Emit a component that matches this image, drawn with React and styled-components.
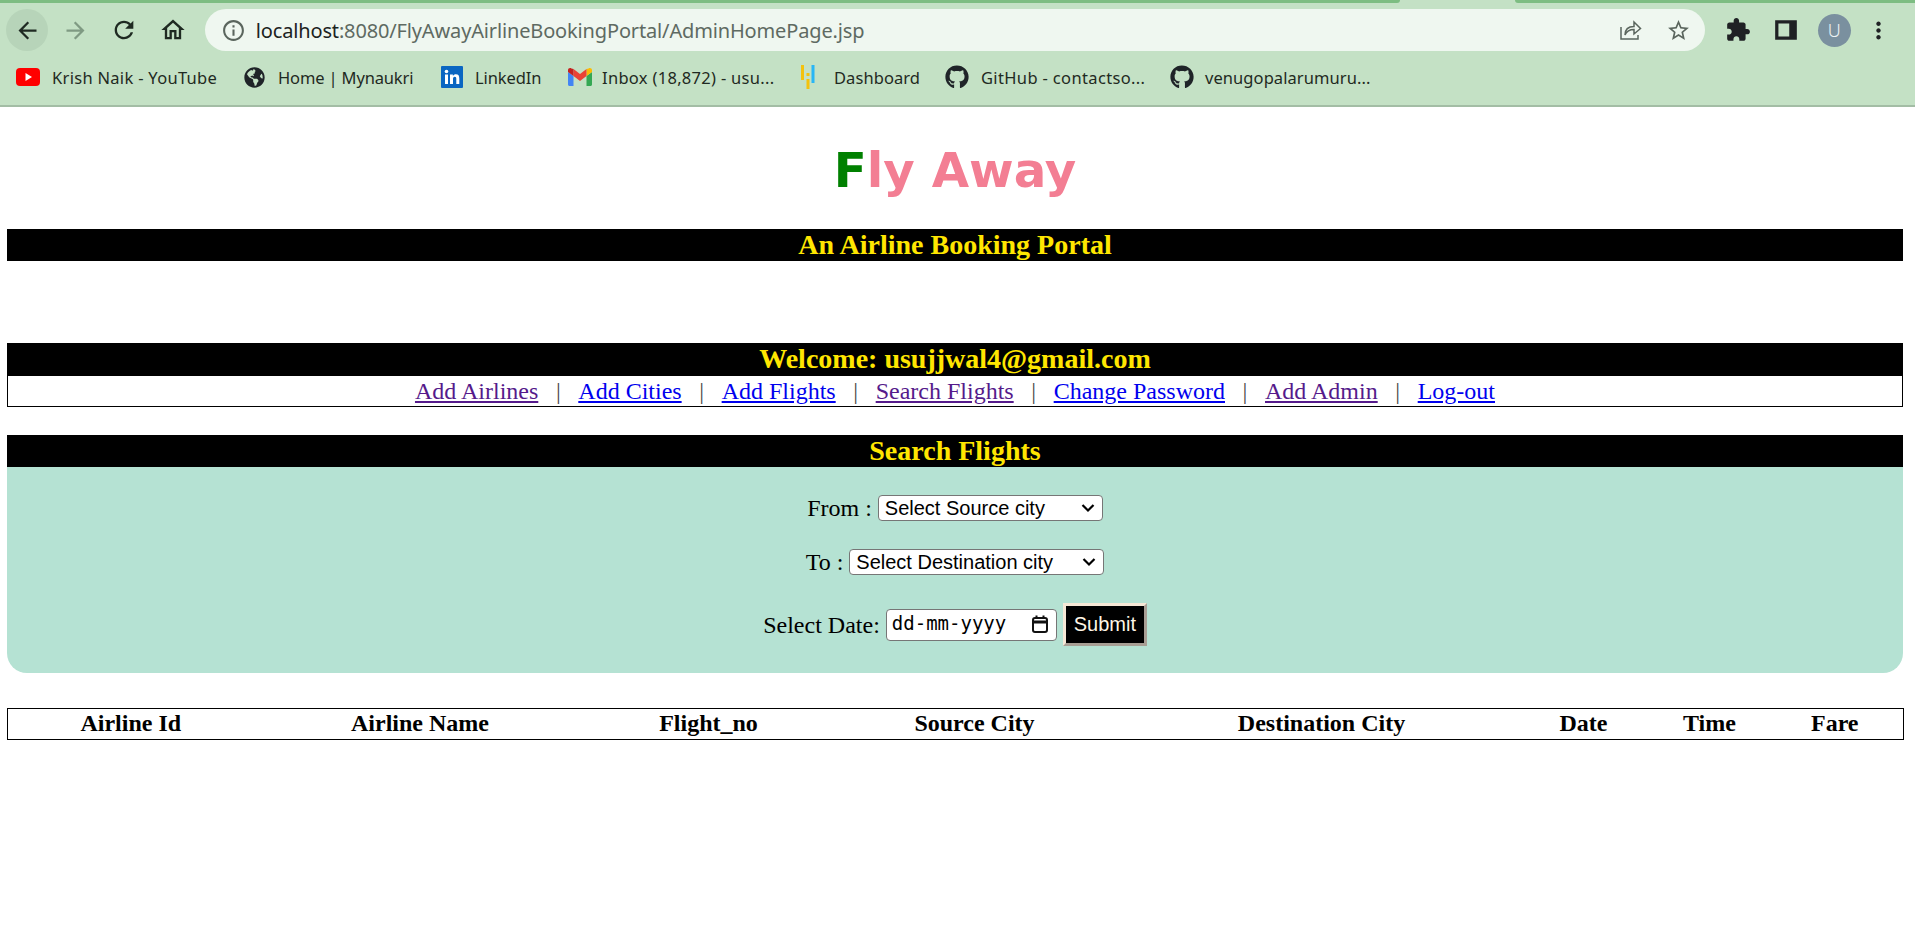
import React from "react";
import styled, { createGlobalStyle } from "styled-components";
import { FaGithub, FaGlobeAmericas } from "react-icons/fa";

const chevron = encodeURIComponent(
  '<svg xmlns="http://www.w3.org/2000/svg" width="16" height="10" viewBox="0 0 16 10"><path d="M2.500 2l5.500 5.500L13.500 2" fill="none" stroke="#000" stroke-width="2.200"/></svg>'
);

const Global = createGlobalStyle`
  html, body { margin: 0; padding: 0; background: #fff; }
  body { font-family: "Liberation Serif", "Times New Roman", serif; overflow: hidden; }
`;

const Page = styled.div`
  width: 1915px;
  height: 952px;
  display: flex;
  flex-direction: column;
  background: #fff;
`;

/* Browser chrome */
const Chrome = styled.header`
  height: 107px;
  flex: none;
  background: #c4e1c5;
  border-bottom: 2px solid #a3bda5;
  box-sizing: border-box;
  display: flex;
  flex-direction: column;
`;
const TabStrip = styled.div`
  height: 3px;
  flex: none;
  display: flex;
  justify-content: space-between;
`;
const TabPiece = styled.div`
  height: 3px;
  width: ${(p) => p.$w}px;
  background: #7dbd82;
  border-radius: ${(p) => (p.$right ? "0 0 0 4px" : "0 0 4px 0")};
`;
const Toolbar = styled.div`
  height: 42px;
  margin-top: 6px;
  flex: none;
  display: flex;
  align-items: center;
  padding-left: 6px;
`;
const NavButton = styled.div`
  width: 42px;
  height: 42px;
  margin-right: 6.700px;
  flex: none;
  border-radius: 50%;
  display: flex;
  align-items: center;
  justify-content: center;
  background: ${(p) => (p.$active ? "#b7d4b9" : "transparent")};
  color: ${(p) => p.$color || "#1f2a22"};
`;
const Omnibox = styled.div`
  width: 1500px;
  height: 42px;
  margin-left: 4px;
  flex: none;
  background: #eff7f0;
  border-radius: 21px;
  display: flex;
  align-items: center;
  padding: 0 14px 0 16px;
  box-sizing: border-box;
  font-family: "Noto Sans", sans-serif;
  font-size: 20px;
  color: #5e6a62;
`;
const Url = styled.div`
  margin-left: 10px;
  flex: 1;
  white-space: nowrap;
  letter-spacing: -0.15px;
`;
const UrlHost = styled.span`
  color: #1c231e;
`;
const OmniIcon = styled.div`
  display: flex;
  margin-left: ${(p) => p.$ml || 0}px;
  color: #5a655d;
`;
const ToolIcon = styled.div`
  width: 28px;
  height: 28px;
  flex: none;
  display: flex;
  align-items: center;
  justify-content: center;
  margin-left: ${(p) => p.$ml}px;
  color: #1f2124;
`;
const Avatar = styled.div`
  width: 33px;
  height: 33px;
  margin-left: ${(p) => p.$ml}px;
  flex: none;
  border-radius: 50%;
  background: #7a909f;
  color: #eef3f5;
  display: flex;
  align-items: center;
  justify-content: center;
  font-family: "Noto Sans", sans-serif;
  font-size: 18px;
  font-weight: 300;
`;
const Bookmarks = styled.nav`
  height: 28px;
  margin-top: 12px;
  flex: none;
  display: flex;
  align-items: center;
  padding-left: 16px;
  font-family: "Noto Sans", sans-serif;
  font-size: 16.5px;
  color: #1f2a22;
`;
const Bookmark = styled.div`
  display: flex;
  align-items: center;
  flex: none;
  width: ${(p) => p.$w}px;
  white-space: nowrap;
  letter-spacing: ${(p) => p.$ls}px;
`;
const BookmarkIcon = styled.span`
  width: 26px;
  height: 24px;
  flex: none;
  margin-right: ${(p) => p.$mr}px;
  display: flex;
  align-items: center;
  justify-content: flex-start;
  color: #1f2428;
`;

/* Page body */
const Main = styled.main`
  padding: 0 12px 0 7px;
  display: flex;
  flex-direction: column;
`;
const Logo = styled.h1`
  margin: 0;
  height: 122px;
  box-sizing: border-box;
  padding-top: 34px;
  text-align: center;
  font-family: "DejaVu Sans", sans-serif;
  font-size: 48.300px;
  line-height: 58px;
  font-weight: 700;
  color: #f37e93;
`;
const LogoInitial = styled.span`
  color: #008000;
`;
const Banner = styled.div`
  height: ${(p) => p.$h || 32}px;
  flex: none;
  background: #000;
  color: #ffe600;
  font-weight: 700;
  font-size: 28px;
  line-height: 32px;
  text-align: center;
`;
const Section = styled.section`
  margin-top: ${(p) => p.$mt}px;
`;
const NavRow = styled.div`
  height: 31px;
  box-sizing: border-box;
  border: 1px solid #000;
  border-top: none;
  display: flex;
  justify-content: center;
  align-items: center;
  font-size: 24px;
`;
const NavLink = styled.a`
  color: ${(p) => (p.$visited ? "#551a8b" : "#0000ee")};
  text-decoration: underline;
`;
const Sep = styled.span`
  margin: 0 17.600px;
  color: #4a4a4a;
`;
const SearchPanel = styled.form`
  background: #b5e2d3;
  border-radius: 0 0 20px 20px;
  padding: 28px 0 27px;
  display: flex;
  flex-direction: column;
  align-items: center;
  gap: 28px;
`;
const FormRow = styled.div`
  display: flex;
  align-items: center;
  justify-content: center;
  gap: 6px;
  font-size: 24px;
  line-height: 1;
  color: #000;
`;
const CitySelect = styled.select`
  width: ${(p) => p.$w}px;
  height: 26px;
  box-sizing: border-box;
  appearance: none;
  padding: 0 0 0 6px;
  font-family: "Liberation Sans", Arial, sans-serif;
  font-size: 20px;
  background: #fff url("data:image/svg+xml,${chevron}") no-repeat right 6px center;
  border: 1px solid #767676;
  border-radius: 4px;
  color: #000;
`;
const DateBox = styled.div`
  width: 171px;
  height: 32px;
  box-sizing: border-box;
  background: #fff;
  border: 1px solid #767676;
  border-radius: 4px;
  display: flex;
  align-items: center;
  justify-content: space-between;
  padding: 0 7px 2px 5px;
  font-family: "DejaVu Sans Mono", monospace;
  font-size: 19px;
  color: #000;
`;
const SubmitButton = styled.button`
  width: 84px;
  height: 43px;
  box-sizing: border-box;
  background: #000;
  color: #fff6e6;
  border: 3px solid;
  border-color: #f6e8d6 #a89e94 #a89e94 #f6e8d6;
  font-family: "Liberation Sans", Arial, sans-serif;
  font-size: 20px;
  padding: 0;
`;
const ResultsTable = styled.table`
  width: 100%;
  margin-top: 35px;
  table-layout: fixed;
  border-collapse: collapse;
  border: 1px solid #000;
  height: 32px;
`;
const Th = styled.th`
  box-sizing: border-box;
  width: ${(p) => p.$w}px;
  padding: 0 ${(p) => p.$pr || 0}px 1px 0;
  font-size: 24px;
  font-weight: 700;
  text-align: center;
  color: #000;
`;

const MaterialIcon = ({ d, size = 24 }) => (
  <svg width={size} height={size} viewBox="0 0 24 24" fill="currentColor"><path d={d} /></svg>
);

const YouTubeIcon = () => (
  <svg width="24" height="18" viewBox="0 0 24 18">
    <rect width="24" height="18" y="0" rx="4" fill="#ff0000" />
    <path d="M9.500 5l6.500 4-6.500 4z" fill="#fff" />
  </svg>
);
const LinkedInIcon = () => (
  <svg width="22" height="22" viewBox="0 0 22 22">
    <rect width="22" height="22" fill="#0a66c2" rx="1" />
    <rect x="4" y="8.500" width="3" height="9.500" fill="#fff" />
    <circle cx="5.500" cy="5.500" r="1.800" fill="#fff" />
    <path d="M9 8.500h2.900v1.400c.6-1 1.700-1.700 3-1.700 2.600 0 3.400 1.600 3.400 4.200V18h-3v-5c0-1.300-.4-2.200-1.600-2.200s-1.700 1-1.700 2.200v5H9z" fill="#fff" />
  </svg>
);
const GmailIcon = () => (
  <svg width="24" height="18" viewBox="0 0 24 18">
    <path d="M1.500 18h4V8L0 4v12.500C0 17.300.7 18 1.500 18z" fill="#4285f4" />
    <path d="M18.500 18h4c.8 0 1.500-.7 1.500-1.500V4l-5.500 4z" fill="#34a853" />
    <path d="M18.500 1v7L24 4V2.200C24 .4 22-.6 20.600.5z" fill="#fbbc04" />
    <path d="M5.500 8V1L12 6l6.500-5v7L12 13z" fill="#ea4335" />
    <path d="M0 2.200V4l5.500 4V1L3.400.5C2-.6 0 .4 0 2.200z" fill="#c5221f" />
  </svg>
);
const DashboardIcon = () => (
  <svg width="14" height="24" viewBox="0 0 14 24">
    <rect x="0" y="0" width="3" height="15" fill="#f4c20d" />
    <rect x="5.500" y="8" width="3" height="3" fill="#f4c20d" />
    <rect x="5.500" y="14" width="3" height="10" fill="#f4c20d" />
    <rect x="10.500" y="0" width="3" height="18" fill="#29b6f6" />
  </svg>
);
const ShareIcon = () => (
  <svg width="24" height="24" viewBox="0 0 24 24" fill="none" stroke="currentColor" strokeWidth="1.500">
    <path d="M3 9v12h17v-4" />
    <path d="M7 17c0-6 4-8.500 9-8.500V4l6.500 6.500L16 16v-4.500c-4 0-7 1-9 5.500z" />
  </svg>
);
const CalendarIcon = () => (
  <svg width="18" height="18" viewBox="0 0 18 18" fill="none" stroke="#111" strokeWidth="2">
    <rect x="2" y="3" width="14" height="14" rx="2" />
    <path d="M2 7h14" strokeWidth="3" />
    <path d="M5.500 0.500v3M12.500 0.500v3" />
  </svg>
);

const icons = {
  back: "M20 11H7.830l5.590-5.590L12 4l-8 8 8 8 1.410-1.410L7.830 13H20v-2z",
  forward: "M4 11h12.170l-5.590-5.590L12 4l8 8-8 8-1.410-1.410L16.170 13H4v-2z",
  reload: "M17.650 6.350C16.200 4.900 14.210 4 12 4c-4.420 0-7.990 3.580-7.990 8s3.570 8 7.990 8c3.730 0 6.840-2.550 7.730-6h-2.080c-.82 2.330-3.040 4-5.650 4-3.310 0-6-2.690-6-6s2.690-6 6-6c1.660 0 3.140.69 4.220 1.780L13 11h7V4l-2.350 2.350z",
  home: "M12 5.690l5 4.500V18h-2v-6H9v6H7v-7.810l5-4.500M12 3L2 12h3v8h6v-6h2v6h6v-8h3L12 3z",
  info: "M11 7h2v2h-2zm0 4h2v6h-2zm1-9C6.480 2 2 6.480 2 12s4.480 10 10 10 10-4.480 10-10S17.520 2 12 2zm0 18c-4.410 0-8-3.590-8-8s3.590-8 8-8 8 3.590 8 8-3.590 8-8 8z",
  star: "M22 9.240l-7.190-.62L12 2 9.190 8.630 2 9.240l5.460 4.730L5.820 21 12 17.270 18.180 21l-1.630-7.030L22 9.240zM12 15.400l-3.760 2.270 1-4.280-3.320-2.880 4.380-.38L12 6.100l1.710 4.040 4.380.38-3.320 2.880 1 4.280L12 15.400z",
  puzzle: "M20.500 11H19V7c0-1.100-.9-2-2-2h-4V3.500C13 2.120 11.880 1 10.500 1S8 2.120 8 3.500V5H4c-1.100 0-1.990.9-1.990 2v3.800H3.500c1.490 0 2.700 1.210 2.700 2.700s-1.210 2.700-2.700 2.700H2V20c0 1.100.9 2 2 2h3.800v-1.500c0-1.490 1.210-2.700 2.700-2.700 1.490 0 2.700 1.210 2.700 2.700V22H17c1.100 0 2-.9 2-2v-4h1.500c1.380 0 2.500-1.120 2.500-2.500S21.880 11 20.500 11z",
  panel: "M2 3h20v18H2zM5 6v12h10V6z",
  more: "M12 8c1.100 0 2-.9 2-2s-.9-2-2-2-2 .9-2 2 .9 2 2 2zm0 2c-1.100 0-2 .9-2 2s.9 2 2 2 2-.9 2-2-.9-2-2-2zm0 6c-1.100 0-2 .9-2 2s.9 2 2 2 2-.9 2-2-.9-2-2-2z",
};

const navLinks = [
  ["Add Airlines", true],
  ["Add Cities", false],
  ["Add Flights", false],
  ["Search Flights", true],
  ["Change Password", false],
  ["Add Admin", true],
  ["Log-out", false],
];

const columns = [
  ["Airline Id", 246, 0],
  ["Airline Name", 333, 0],
  ["Flight_no", 244, 0],
  ["Source City", 288, 0],
  ["Destination City", 406, 0],
  ["Date", 118, 0],
  ["Time", 134, 0],
  ["Fare", 127, 10],
];

export default function App() {
  return (
    <Page>
      <Global />
      <Chrome>
        <TabStrip>
          <TabPiece $w={1400} />
          <TabPiece $w={400} $right />
        </TabStrip>
        <Toolbar>
          <NavButton $active><MaterialIcon d={icons.back} size={27} /></NavButton>
          <NavButton $color="#7f9a83"><MaterialIcon d={icons.forward} size={27} /></NavButton>
          <NavButton><MaterialIcon d={icons.reload} size={28} /></NavButton>
          <NavButton><MaterialIcon d={icons.home} size={28} /></NavButton>
          <Omnibox>
            <OmniIcon><MaterialIcon d={icons.info} size={25} /></OmniIcon>
            <Url><UrlHost>localhost</UrlHost>:8080/FlyAwayAirlineBookingPortal/AdminHomePage.jsp</Url>
            <OmniIcon><ShareIcon /></OmniIcon>
            <OmniIcon $ml={24}><MaterialIcon d={icons.star} size={25} /></OmniIcon>
          </Omnibox>
          <ToolIcon $ml={19}><MaterialIcon d={icons.puzzle} size={26} /></ToolIcon>
          <ToolIcon $ml={20}><MaterialIcon d={icons.panel} size={26} /></ToolIcon>
          <Avatar $ml={18}>U</Avatar>
          <ToolIcon $ml={14}><MaterialIcon d={icons.more} size={27} /></ToolIcon>
        </Toolbar>
        <Bookmarks>
          <Bookmark $w={228} $ls={0.3}><BookmarkIcon $mr={10}><YouTubeIcon /></BookmarkIcon>Krish Naik - YouTube</Bookmark>
          <Bookmark $w={197} $ls={-0.15}><BookmarkIcon $mr={8}><FaGlobeAmericas size={21} /></BookmarkIcon>Home | Mynaukri</Bookmark>
          <Bookmark $w={127} $ls={-0.1}><BookmarkIcon $mr={8}><LinkedInIcon /></BookmarkIcon>LinkedIn</Bookmark>
          <Bookmark $w={233} $ls={0.3}><BookmarkIcon $mr={8}><GmailIcon /></BookmarkIcon>Inbox (18,872) - usu...</Bookmark>
          <Bookmark $w={144} $ls={0.07}><BookmarkIcon $mr={7}><DashboardIcon /></BookmarkIcon>Dashboard</Bookmark>
          <Bookmark $w={225} $ls={0.35}><BookmarkIcon $mr={10}><FaGithub size={24} /></BookmarkIcon>GitHub - contactso...</Bookmark>
          <Bookmark $w={220} $ls={0.07}><BookmarkIcon $mr={9}><FaGithub size={24} /></BookmarkIcon>venugopalarumuru...</Bookmark>
        </Bookmarks>
      </Chrome>
      <Main>
        <Logo><LogoInitial>F</LogoInitial>ly Away</Logo>
        <Banner>An Airline Booking Portal</Banner>
        <Section $mt={82}>
          <Banner $h={33}>Welcome: usujjwal4@gmail.com</Banner>
          <NavRow>
            {navLinks.map(([label, visited], i) => (
              <React.Fragment key={label}>
                {i > 0 && <Sep>|</Sep>}
                <NavLink href="#" $visited={visited}>{label}</NavLink>
              </React.Fragment>
            ))}
          </NavRow>
        </Section>
        <Section $mt={28}>
          <Banner>Search Flights</Banner>
          <SearchPanel>
            <FormRow>
              From :
              <CitySelect $w={225}><option>Select Source city</option></CitySelect>
            </FormRow>
            <FormRow>
              To :
              <CitySelect $w={255}><option>Select Destination city</option></CitySelect>
            </FormRow>
            <FormRow>
              Select Date:
              <DateBox>dd-mm-yyyy<CalendarIcon /></DateBox>
              <SubmitButton type="button">Submit</SubmitButton>
            </FormRow>
          </SearchPanel>
        </Section>
        <ResultsTable>
          <thead>
            <tr>
              {columns.map(([label, w, pr]) => <Th key={label} $w={w} $pr={pr}>{label}</Th>)}
            </tr>
          </thead>
        </ResultsTable>
      </Main>
    </Page>
  );
}
